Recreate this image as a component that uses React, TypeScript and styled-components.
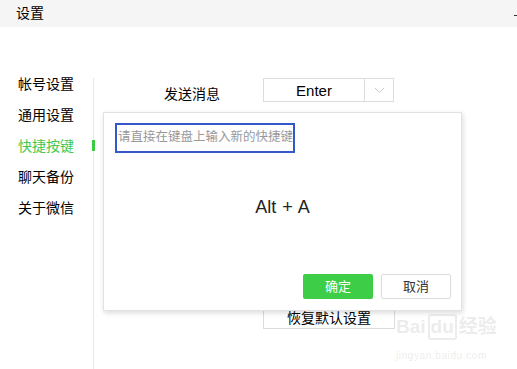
import styled, { createGlobalStyle } from "styled-components";

const Global = createGlobalStyle`
  body {
    margin: 0;
    background: #fff;
    font-family: "Liberation Sans", "Noto Sans CJK SC", sans-serif;
  }
`;

const Window = styled.div`
  width: 517px;
  height: 369px;
  position: relative;
  overflow: hidden;
  background: #fff;
  color: #000;
`;

const TitleBar = styled.div`
  height: 27px;
  background: #f5f5f5;
  display: flex;
  align-items: center;
  justify-content: space-between;
  padding-left: 16px;
  font-size: 14px;
  line-height: 27px;
`;

const MinDash = styled.div`
  width: 3px;
  height: 1px;
  background: #333;
  margin-top: 4px;
`;

const Main = styled.div`
  display: flex;
  height: 342px;
`;

const Nav = styled.div`
  width: 75px;
  padding: 42px 0 0 18px;
  display: flex;
  flex-direction: column;
`;

const NavItem = styled.div<{ $active?: boolean }>`
  height: 31px;
  line-height: 31px;
  font-size: 14px;
  white-space: nowrap;
  color: ${(p) => (p.$active ? "#46c84f" : "#000")};
`;

const Divider = styled.div`
  width: 1px;
  margin-top: 51px;
  background: #e6e6e6;
  position: relative;
`;

const Indicator = styled.div`
  position: absolute;
  left: -1px;
  top: 62px;
  width: 3px;
  height: 11px;
  background: #3ccc44;
`;

const Content = styled.div`
  flex: 1;
  padding: 51px 0 0 70px;
  display: flex;
  flex-direction: column;
`;

const Row = styled.div`
  display: flex;
  align-items: center;
  height: 24px;
`;

const Label = styled.div`
  width: 56px;
  margin-right: 43px;
  font-size: 14px;
  line-height: 24px;
  padding-top: 7px;
  white-space: nowrap;
`;

const Select = styled.div`
  display: flex;
  width: 129px;
  height: 22px;
  border: 1px solid #dcdcdc;
`;

const SelectValue = styled.div`
  width: 100px;
  border-right: 1px solid #dcdcdc;
  text-align: center;
  font-size: 15px;
  line-height: 23px;
`;

const SelectArrow = styled.div`
  flex: 1;
  display: flex;
  align-items: center;
  justify-content: center;
`;

const ResetButton = styled.div`
  margin: 203px 0 0 99px;
  width: 130px;
  height: 22px;
  border: 1px solid #dcdcdc;
  text-align: center;
  font-size: 14px;
  line-height: 24px;
`;

const Dialog = styled.div`
  position: absolute;
  left: 103px;
  top: 112px;
  width: 357px;
  height: 197px;
  background: #fff;
  border: 1px solid #e2e2e2;
  box-shadow: 1px 2px 5px rgba(0, 0, 0, 0.14);
  display: flex;
  flex-direction: column;
`;

const KeyInput = styled.div`
  margin: 10px 0 0 11px;
  width: 175px;
  height: 26px;
  border: 2px solid #3558c9;
  padding-left: 1px;
  font-size: 12.5px;
  line-height: 24px;
  color: #999;
  white-space: nowrap;
`;

const Combo = styled.div`
  margin-top: 42px;
  text-align: center;
  font-size: 18px;
  line-height: 24px;
  word-spacing: 1px;
  color: #222;
`;

const Actions = styled.div`
  margin-top: auto;
  margin-bottom: 11px;
  padding-right: 10px;
  display: flex;
  justify-content: flex-end;
  gap: 8px;
`;

const Button = styled.div<{ $primary?: boolean }>`
  width: ${(p) => (p.$primary ? "70px" : "68px")};
  height: ${(p) => (p.$primary ? "25px" : "23px")};
  border: ${(p) => (p.$primary ? "none" : "1px solid #dcdcdc")};
  border-radius: 2px;
  background: ${(p) => (p.$primary ? "#3dcd46" : "#fff")};
  color: ${(p) => (p.$primary ? "#fff" : "#333")};
  text-align: center;
  font-size: 13px;
  line-height: ${(p) => (p.$primary ? "25px" : "23px")};
`;

const Watermark = styled.div`
  position: absolute;
  left: 396px;
  top: 314px;
  color: rgba(200, 200, 200, 0.35);
  pointer-events: none;
`;

const MarkTop = styled.div`
  display: flex;
  align-items: baseline;
  font-size: 19px;
  font-weight: bold;
  line-height: 22px;
`;

const MarkBox = styled.span`
  border: 2px solid rgba(200, 200, 200, 0.35);
  border-radius: 3px;
  padding: 0 1px;
  margin: 0 2px;
`;

const MarkSub = styled.div`
  font-size: 10px;
  margin-top: 10px;
  letter-spacing: 0.6px;
`;

const navItems = ["帐号设置", "通用设置", "快捷按键", "聊天备份", "关于微信"];

export default function App() {
  return (
    <>
      <Global />
      <Window>
        <TitleBar>
          <span>设置</span>
          <MinDash />
        </TitleBar>
        <Main>
          <Nav>
            {navItems.map((t) => (
              <NavItem key={t} $active={t === "快捷按键"}>
                {t}
              </NavItem>
            ))}
          </Nav>
          <Divider>
            <Indicator />
          </Divider>
          <Content>
            <Row>
              <Label>发送消息</Label>
              <Select>
                <SelectValue>Enter</SelectValue>
                <SelectArrow>
                  <svg width="11" height="7" viewBox="0 0 11 7">
                    <path d="M1 1l4.5 4.5L10 1" fill="none" stroke="#c8c8c8" strokeWidth="1" />
                  </svg>
                </SelectArrow>
              </Select>
            </Row>
            <ResetButton>恢复默认设置</ResetButton>
          </Content>
        </Main>
        <Dialog>
          <KeyInput>请直接在键盘上输入新的快捷键</KeyInput>
          <Combo>Alt + A</Combo>
          <Actions>
            <Button $primary>确定</Button>
            <Button>取消</Button>
          </Actions>
        </Dialog>
        <Watermark>
          <MarkTop>
            Bai<MarkBox>du</MarkBox>经验
          </MarkTop>
          <MarkSub>jingyan.baidu.com</MarkSub>
        </Watermark>
      </Window>
    </>
  );
}
